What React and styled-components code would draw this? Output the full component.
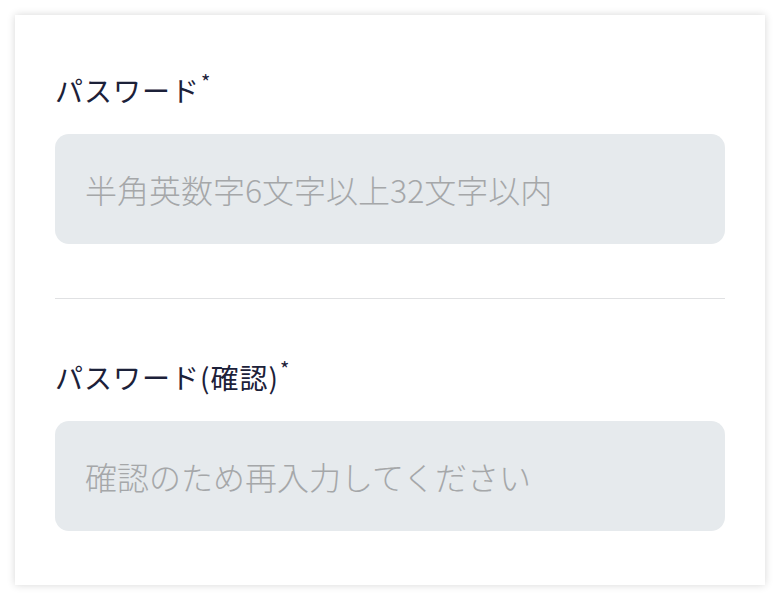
import React from 'react'
import styled, { createGlobalStyle } from 'styled-components'

const GlobalStyle = createGlobalStyle`
  html, body {
    margin: 0;
    padding: 0;
    background: #ffffff;
  }
  body {
    font-family: "Noto Sans CJK JP", "Noto Sans", sans-serif;
  }
  * {
    box-sizing: border-box;
  }
`

const Page = styled.div`
  width: 780px;
  height: 600px;
  padding: 15px;
`

const Card = styled.form`
  width: 750px;
  height: 570px;
  background: #ffffff;
  box-shadow: 0 0 8px rgba(0, 0, 0, 0.16);
  padding: 0 40px;
  display: flex;
  flex-direction: column;
`

const Field = styled.div`
  display: flex;
  flex-direction: column;
  padding: ${(p) => p.$top}px 0 54px;
`

const Label = styled.label`
  display: flex;
  align-items: flex-start;
  height: 40px;
  line-height: 40px;
  font-size: 28px;
  font-weight: 400;
  color: #1c2139;
  margin-bottom: 24px;
  letter-spacing: 1px;
`

const Required = styled.span`
  font-size: 20px;
  line-height: 20px;
  margin-left: 1px;
  margin-top: 2px;
  color: #1c2139;
`

const Input = styled.input`
  width: 100%;
  height: 110px;
  border: none;
  outline: none;
  border-radius: 14px;
  background: #e6eaed;
  padding: 0 30px;
  font-family: "Noto Sans CJK JP", "Noto Sans", sans-serif;
  font-size: 32px;
  font-weight: 300;
  color: #333;

  &::placeholder {
    color: #a5a7a9;
  }
`

const Divider = styled.hr`
  margin: 0;
  border: none;
  height: 2px;
  background: #e0e1e3;
`

export default function App() {
  return (
    <Page>
      <GlobalStyle />
      <Card>
        <Field $top={55}>
          <Label htmlFor="password">
            パスワード<Required>*</Required>
          </Label>
          <Input id="password" type="password" placeholder="半角英数字6文字以上32文字以内" />
        </Field>
        <Divider />
        <Field $top={58}>
          <Label htmlFor="password-confirm">
            パスワード(確認)<Required>*</Required>
          </Label>
          <Input id="password-confirm" type="password" placeholder="確認のため再入力してください" />
        </Field>
      </Card>
    </Page>
  )
}
